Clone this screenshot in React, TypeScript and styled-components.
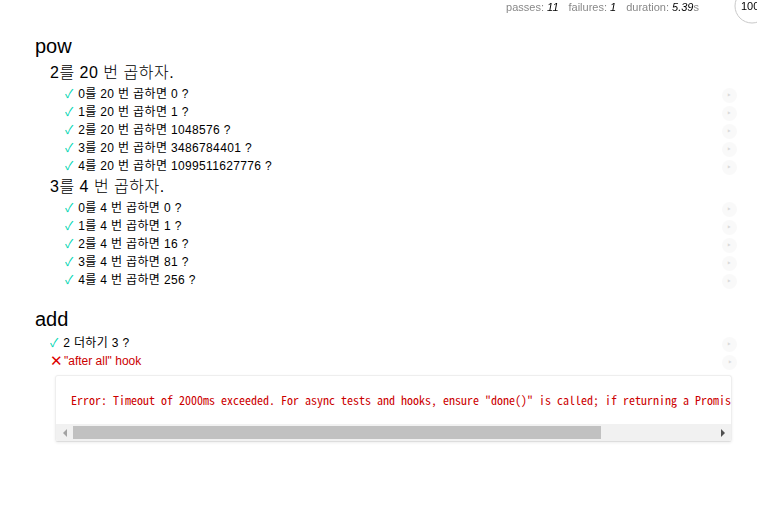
import React from "react";
import styled, { createGlobalStyle } from "styled-components";

const GlobalStyle = createGlobalStyle`
  html, body {
    margin: 0;
    padding: 0;
    background: #fff;
  }
  body {
    font-family: "Liberation Sans", "Noto Sans CJK KR", Arial, sans-serif;
    color: #000;
  }
`;

const Report = styled.div`
  font: 20px/1.5 "Liberation Sans", "Noto Sans CJK KR", Arial, sans-serif;
  padding: 16px 20px 0 20px;
`;

const SuiteList = styled.ul`
  list-style: none;
  margin: 0;
  padding: 0;
`;

const Suite = styled.li`
  margin-left: 15px;
`;

const SuiteTitle = styled.h1<{ $nested?: boolean }>`
  margin: ${(p) => (p.$nested ? "0" : "15px 0 0")};
  font-size: ${(p) => (p.$nested ? "0.8em" : "1em")};
  letter-spacing: ${(p) => (p.$nested ? "0.5px" : "0")};
  font-weight: 200;
  line-height: 1.5;
`;

const Test = styled.li`
  margin-left: 15px;
  overflow: hidden;
`;

const TestTitle = styled.h2<{ $fail?: boolean }>`
  position: relative;
  margin: 0;
  font-size: 12px;
  font-weight: normal;
  line-height: 18px;
  letter-spacing: ${(p) => (p.$fail ? "0" : "0.35px")};
  color: ${(p) => (p.$fail ? "#c00" : "#000")};
`;

const Mark = styled.span<{ $fail?: boolean }>`
  float: left;
  width: ${(p) => (p.$fail ? "11px" : "auto")};
  margin-right: ${(p) => (p.$fail ? "3px" : "5px")};
  font-size: ${(p) => (p.$fail ? "15px" : "12px")};
  line-height: 18px;
  letter-spacing: 0;
  color: ${(p) => (p.$fail ? "#d00" : "#00d6b2")};
`;

const Replay = styled.a`
  position: absolute;
  top: 3px;
  right: 0;
  width: 15px;
  height: 15px;
  line-height: 15px;
  text-align: center;
  font-size: 11px;
  border-radius: 15px;
  background: #eee;
  color: #888;
  opacity: 0.3;
  text-decoration: none;
`;

const ErrorBox = styled.div`
  float: left;
  clear: left;
  margin: 5px 0 5px 5px;
  width: calc(100% - 12px);
  border: 1px solid #eee;
  border-bottom-color: #ddd;
  border-radius: 3px;
  box-shadow: 0 1px 3px #eee;
  overflow: hidden;
`;

const ErrorText = styled.pre`
  margin: 0;
  padding: 15px;
  font: 12px/18px "Noto Sans Mono CJK KR", "Liberation Mono", monospace;
  color: #c00;
  white-space: pre;
`;

const ScrollBar = styled.div`
  display: flex;
  align-items: center;
  height: 17px;
  background: #f1f1f1;
`;

const ScrollArrow = styled.div<{ $dir: "left" | "right" }>`
  width: 17px;
  height: 17px;
  display: flex;
  align-items: center;
  justify-content: center;
  flex: none;
  &::before {
    content: "";
    border-top: 4px solid transparent;
    border-bottom: 4px solid transparent;
    ${(p) =>
      p.$dir === "left"
        ? "border-right: 4px solid #a3a3a3;"
        : "border-left: 4px solid #505050;"}
  }
`;

const ScrollTrack = styled.div`
  flex: 1;
  height: 13px;
`;

const ScrollThumb = styled.div`
  width: 528px;
  height: 13px;
  background: #c1c1c1;
`;

const Stats = styled.ul`
  position: fixed;
  top: 0;
  right: -15px;
  margin: 0;
  padding: 0;
  display: flex;
  align-items: flex-start;
  font: 11px/14px "Liberation Sans", Arial, sans-serif;
  color: #888;
  list-style: none;
  z-index: 1;
`;

const Stat = styled.li`
  margin: 0 5px;
  white-space: pre;
  em {
    color: #000;
  }
`;

const Progress = styled.li`
  margin: -14px 0 0 28px;
  width: 40px;
  height: 40px;
`;

type TestItem = { title: string };

const powSuites: { title: string; tests: TestItem[] }[] = [
  {
    title: "2를 20 번 곱하자.",
    tests: [
      { title: "0를 20 번 곱하면 0 ?" },
      { title: "1를 20 번 곱하면 1 ?" },
      { title: "2를 20 번 곱하면 1048576 ?" },
      { title: "3를 20 번 곱하면 3486784401 ?" },
      { title: "4를 20 번 곱하면 1099511627776 ?" },
    ],
  },
  {
    title: "3를 4 번 곱하자.",
    tests: [
      { title: "0를 4 번 곱하면 0 ?" },
      { title: "1를 4 번 곱하면 1 ?" },
      { title: "2를 4 번 곱하면 16 ?" },
      { title: "3를 4 번 곱하면 81 ?" },
      { title: "4를 4 번 곱하면 256 ?" },
    ],
  },
];

const PassTest = ({ title }: TestItem) => (
  <Test>
    <TestTitle>
      <Mark>✓</Mark>
      {title}
      <Replay href="#">‣</Replay>
    </TestTitle>
  </Test>
);

export default function App() {
  return (
    <>
      <GlobalStyle />
      <Stats>
        <Stat>
          passes: <em>11</em>
        </Stat>
        <Stat>
          failures: <em>1</em>
        </Stat>
        <Stat>
          duration: <em>5.39</em>s
        </Stat>
        <Progress>
          <svg width="40" height="40" viewBox="0 0 40 40">
            <circle cx="20" cy="20" r="17" fill="none" stroke="#c8c8c8" strokeWidth="1" />
            <text
              x="9"
              y="24"
              fontSize="11"
              fontFamily="Liberation Sans, Arial, sans-serif"
              fill="#000"
            >
              100%
            </text>
          </svg>
        </Progress>
      </Stats>
      <Report>
        <SuiteList>
          <Suite>
            <SuiteTitle>pow</SuiteTitle>
            <SuiteList>
              {powSuites.map((s) => (
                <Suite key={s.title}>
                  <SuiteTitle $nested>{s.title}</SuiteTitle>
                  <SuiteList>
                    {s.tests.map((t) => (
                      <PassTest key={t.title} title={t.title} />
                    ))}
                  </SuiteList>
                </Suite>
              ))}
            </SuiteList>
          </Suite>
          <Suite>
            <SuiteTitle>add</SuiteTitle>
            <SuiteList>
              <PassTest title="2 더하기 3 ?" />
              <Test>
                <TestTitle $fail>
                  <Mark $fail>✕</Mark>
                  "after all" hook
                  <Replay href="#">‣</Replay>
                </TestTitle>
                <ErrorBox>
                  <ErrorText>
                    Error: Timeout of 2000ms exceeded. For async tests and hooks, ensure "done()" is called; if returning a Promise, ensure it resolves.
                  </ErrorText>
                  <ScrollBar>
                    <ScrollArrow $dir="left" />
                    <ScrollTrack>
                      <ScrollThumb />
                    </ScrollTrack>
                    <ScrollArrow $dir="right" />
                  </ScrollBar>
                </ErrorBox>
              </Test>
            </SuiteList>
          </Suite>
        </SuiteList>
      </Report>
    </>
  );
}
